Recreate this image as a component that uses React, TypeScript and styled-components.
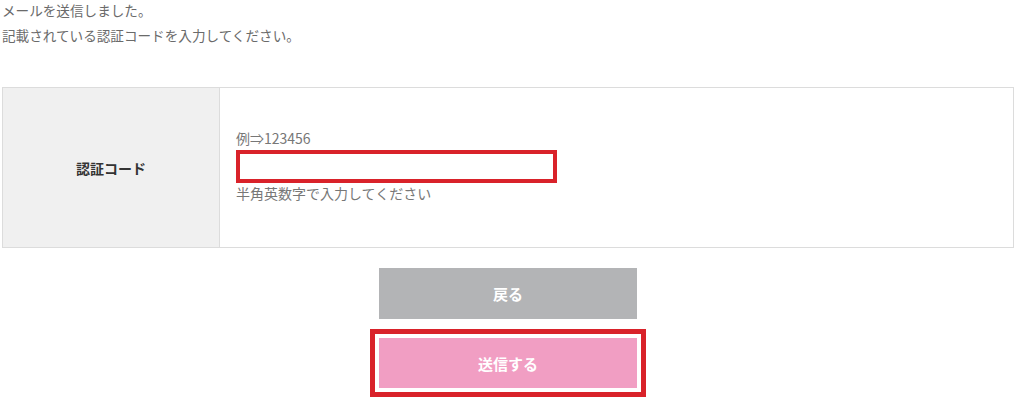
import React from "react";
import styled, { createGlobalStyle } from "styled-components";

const GlobalStyle = createGlobalStyle`
  html, body {
    margin: 0;
    padding: 0;
    background: #fff;
  }
  body {
    font-family: "Noto Sans CJK JP", "Noto Sans", sans-serif;
    color: #666;
  }
`;

const App: React.FC = () => {
  return (
    <>
      <GlobalStyle />
      <Page>
        <Intro>
          <p>メールを送信しました。</p>
          <p>記載されている認証コードを入力してください。</p>
        </Intro>
        <FormTable>
          <LabelCell>認証コード</LabelCell>
          <FieldCell>
            <FieldBlock>
              <Example>例⇒123456</Example>
              <CodeInput type="text" />
              <Hint>半角英数字で入力してください</Hint>
            </FieldBlock>
          </FieldCell>
        </FormTable>
        <Actions>
          <ActionButton $variant="back">戻る</ActionButton>
          <Highlight>
            <ActionButton $variant="submit">送信する</ActionButton>
          </Highlight>
        </Actions>
      </Page>
    </>
  );
};

const Page = styled.div`
  width: 1012px;
  margin-left: 2px;
`;

const Intro = styled.div`
  margin-top: -2px;
  font-size: 13.6px;
  line-height: 25px;
  color: #6a6a6a;
  p {
    margin: 0;
  }
`;

const FormTable = styled.div`
  display: grid;
  grid-template-columns: 217px 1fr;
  margin-top: 39px;
  height: 161px;
  border: 1px solid #dcdcdc;
  box-sizing: border-box;
`;

const LabelCell = styled.div`
  display: flex;
  align-items: center;
  justify-content: center;
  background: #f0f0f0;
  border-right: 1px solid #dcdcdc;
  font-size: 14px;
  font-weight: bold;
  color: #333;
`;

const FieldCell = styled.div`
  display: flex;
  align-items: center;
  padding-left: 16px;
  padding-bottom: 4px;
`;

const FieldBlock = styled.div`
  display: flex;
  flex-direction: column;
  align-items: flex-start;
`;

const Example = styled.span`
  font-size: 14px;
  line-height: 20px;
  color: #777;
  margin-bottom: 2px;
`;

const CodeInput = styled.input`
  box-sizing: border-box;
  width: 321px;
  height: 33px;
  border: 4px solid #d9222a;
  background: #fff;
  outline: none;
  padding: 0 6px;
  font-size: 14px;
`;

const Hint = styled.span`
  font-size: 14px;
  line-height: 20px;
  color: #777;
`;

const Actions = styled.div`
  display: flex;
  flex-direction: column;
  align-items: center;
  margin-top: 20px;
  gap: 10px;
`;

const Highlight = styled.div`
  border: 5px solid #d9222a;
  padding: 4px;
  background: #fff;
`;

const ActionButton = styled.button<{ $variant: "back" | "submit" }>`
  display: flex;
  align-items: center;
  justify-content: center;
  width: 258px;
  height: ${(p) => (p.$variant === "back" ? "51px" : "50px")};
  border: none;
  background: ${(p) => (p.$variant === "back" ? "#b3b4b6" : "#f19ec3")};
  color: #fff;
  font-family: "Noto Sans CJK JP", "Noto Sans", sans-serif;
  font-size: 15px;
  font-weight: bold;
  cursor: pointer;
`;

export default App;
